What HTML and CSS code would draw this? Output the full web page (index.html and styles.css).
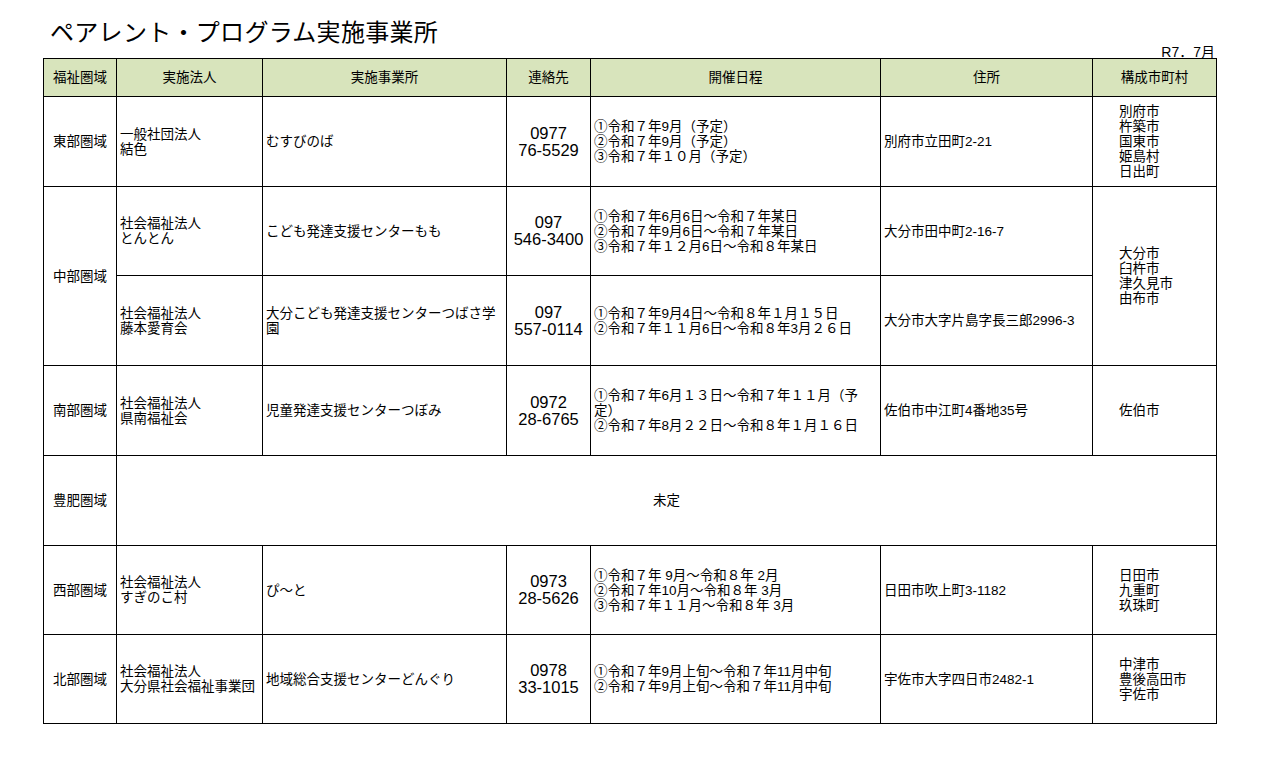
FILE: index.html
```html
<!DOCTYPE html>
<html lang="ja">
<head>
<meta charset="utf-8">
<title>ペアレント・プログラム実施事業所</title>
<link rel="stylesheet" href="styles.css">
</head>
<body>
<div class="page">
  <h1 class="title">ペアレント・プログラム実施事業所</h1>
  <div class="date">R7．7月</div>
  <table class="list">
    <colgroup>
      <col class="c1"><col class="c2"><col class="c3"><col class="c4"><col class="c5"><col class="c6"><col class="c7">
    </colgroup>
    <thead>
      <tr class="head">
        <th>福祉圏域</th><th>実施法人</th><th>実施事業所</th><th>連絡先</th><th>開催日程</th><th>住所</th><th>構成市町村</th>
      </tr>
    </thead>
    <tbody>
      <tr class="r90">
        <td class="area">東部圏域</td>
        <td class="txt">一般社団法人<br>結色</td>
        <td class="txt">むすびのば</td>
        <td class="tel">0977<br>76-5529</td>
        <td class="txt">①令和７年9月（予定）<br>②令和７年9月（予定）<br>③令和７年１０月（予定）</td>
        <td class="txt">別府市立田町2-21</td>
        <td class="city">別府市<br>杵築市<br>国東市<br>姫島村<br>日出町</td>
      </tr>
      <tr class="r89">
        <td class="area" rowspan="2">中部圏域</td>
        <td class="txt">社会福祉法人<br>とんとん</td>
        <td class="txt">こども発達支援センターもも</td>
        <td class="tel">097<br>546-3400</td>
        <td class="txt">①令和７年6月6日～令和７年某日<br>②令和７年9月6日～令和７年某日<br>③令和７年１２月6日～令和８年某日</td>
        <td class="txt">大分市田中町2-16-7</td>
        <td class="city" rowspan="2">大分市<br>臼杵市<br>津久見市<br>由布市</td>
      </tr>
      <tr class="r90">
        <td class="txt">社会福祉法人<br>藤本愛育会</td>
        <td class="txt">大分こども発達支援センターつばさ学<br>園</td>
        <td class="tel">097<br>557-0114</td>
        <td class="txt">①令和７年9月4日～令和８年１月１５日<br>②令和７年１１月6日～令和８年3月２６日</td>
        <td class="txt">大分市大字片島字長三郎2996-3</td>
      </tr>
      <tr class="r90">
        <td class="area">南部圏域</td>
        <td class="txt">社会福祉法人<br>県南福祉会</td>
        <td class="txt">児童発達支援センターつぼみ</td>
        <td class="tel">0972<br>28-6765</td>
        <td class="txt">①令和７年6月１３日～令和７年１１月（予<br>定）<br>②令和７年8月２２日～令和８年１月１６日</td>
        <td class="txt">佐伯市中江町4番地35号</td>
        <td class="city">佐伯市</td>
      </tr>
      <tr class="r90">
        <td class="area">豊肥圏域</td>
        <td class="none" colspan="6">未定</td>
      </tr>
      <tr class="r89">
        <td class="area">西部圏域</td>
        <td class="txt">社会福祉法人<br>すぎのこ村</td>
        <td class="txt">ぴ～と</td>
        <td class="tel">0973<br>28-5626</td>
        <td class="txt">①令和７年 9月～令和８年 2月<br>②令和７年10月～令和８年 3月<br>③令和７年１１月～令和８年 3月</td>
        <td class="txt">日田市吹上町3-1182</td>
        <td class="city">日田市<br>九重町<br>玖珠町</td>
      </tr>
      <tr class="r89">
        <td class="area">北部圏域</td>
        <td class="txt">社会福祉法人<br>大分県社会福祉事業団</td>
        <td class="txt">地域総合支援センターどんぐり</td>
        <td class="tel">0978<br>33-1015</td>
        <td class="txt">①令和７年9月上旬～令和７年11月中旬<br>②令和７年9月上旬～令和７年11月中旬</td>
        <td class="txt">宇佐市大字四日市2482-1</td>
        <td class="city">中津市<br>豊後高田市<br>宇佐市</td>
      </tr>
    </tbody>
  </table>
</div>
</body>
</html>
```

FILE: styles.css
```css
html, body {
  margin: 0;
  padding: 0;
  background: #ffffff;
}
body {
  font-family: "Liberation Sans", "Noto Sans CJK JP", sans-serif;
  font-weight: 400;
  color: #000;
}
.page {
  width: 1173px;
  margin-left: 43px;
}
.title {
  margin: 0 0 0 7px;
  padding-top: 19px;
  font-size: 24px;
  line-height: 28px;
  font-weight: 400;
  letter-spacing: 0.3px;
}
.date {
  text-align: right;
  font-size: 14px;
  line-height: 11px;
  padding-right: 1px;
}
.list {
  border-collapse: collapse;
  table-layout: fixed;
  width: 1173px;
  font-size: 13.5px;
  line-height: 15px;
}
.c1 { width: 73px; }
.c2 { width: 146px; }
.c3 { width: 244px; }
.c4 { width: 84px; }
.c5 { width: 290px; }
.c6 { width: 212px; }
.c7 { width: 124px; }
.list th, .list td {
  border: 1px solid #000;
  padding: 0 3px;
  vertical-align: middle;
}
.head {
  height: 38px;
}
.list th {
  background: #d8e4bc;
  font-weight: 400;
  text-align: center;
}
.r90 { height: 90px; }
.r89 { height: 89px; }
.list td.area {
  text-align: center;
}
.list td.txt {
  text-align: left;
  white-space: nowrap;
}
.list td.tel {
  text-align: center;
  font-size: 16.5px;
  line-height: 17px;
  padding: 0 1px;
}
.list td.city {
  text-align: left;
  padding-left: 26px;
}
.list td.none {
  text-align: center;
}
```
